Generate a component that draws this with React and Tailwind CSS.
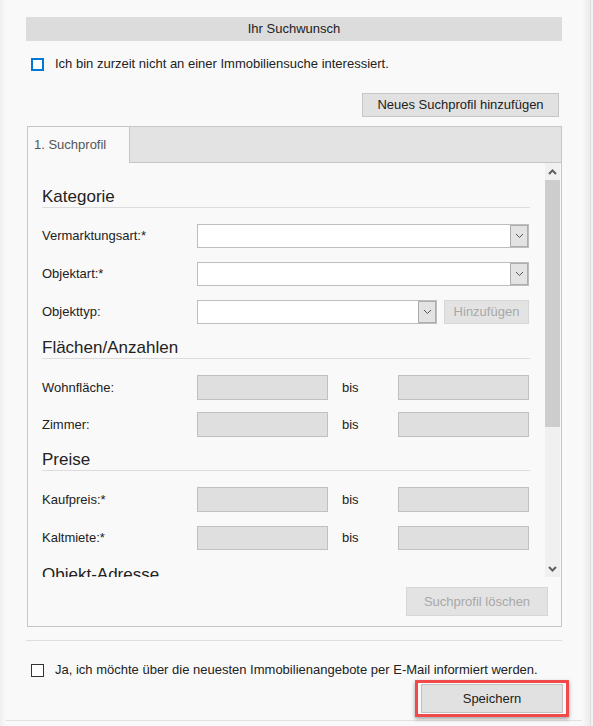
const font = { fontFamily: '"Liberation Sans", Arial, sans-serif' };

function Chevron({ up = false, bold = false, className = "" }) {
  return (
    <svg width="9" height="6" viewBox="0 0 9 6" className={className}>
      <polyline
        points={up ? "1,5 4.5,1.5 8,5" : "1,1 4.5,4.5 8,1"}
        fill="none"
        stroke={bold ? "#606060" : "#555"}
        strokeWidth={bold ? 2 : 1}
      />
    </svg>
  );
}

function Select({ width }) {
  return (
    <div className={`flex h-[24px] items-stretch justify-end border border-[#bdbdbd] bg-white ${width}`}>
      <div className="flex w-[18px] items-center justify-center border border-[#adadad] bg-[#e3e3e3]">
        <Chevron />
      </div>
    </div>
  );
}

function Heading({ children, className = "" }) {
  return (
    <div className={`border-b border-[#dcdcdc] text-[17px] leading-[20px] text-[#222] ${className}`}>
      {children}
    </div>
  );
}

function FieldRow({ label, children, className = "" }) {
  return (
    <div className={`flex items-center ${className}`}>
      <div className="w-[155px] shrink-0">{label}</div>
      {children}
    </div>
  );
}

function RangeRow({ label, className = "", h = "h-[25px]" }) {
  return (
    <FieldRow label={label} className={className}>
      <div className={`w-[131px] border border-[#c0c0c0] bg-[#dfdfdf] ${h}`} />
      <div className="w-[70px] pl-[14px]">bis</div>
      <div className={`w-[131px] border border-[#c0c0c0] bg-[#dfdfdf] ${h}`} />
    </FieldRow>
  );
}

export default function App() {
  return (
    <div
      className="flex h-[726px] w-[593px] overflow-hidden bg-[#f9f9f9] text-[13px] leading-[16px] text-[#222]"
      style={font}
    >
      <div className="w-[6px] shrink-0 bg-gradient-to-r from-[#efefef] to-[#f9f9f9]" />

      <div className="flex h-[721px] flex-1 flex-col border-b border-[#e2e2e2] px-[20px] pt-[17px]">
        <div className="flex h-[24px] shrink-0 items-center justify-center bg-[#dcdcdc]">Ihr Suchwunsch</div>

        <label className="mt-[15px] flex shrink-0 items-center pl-[5px]">
          <span className="h-[13px] w-[13px] border-2 border-[#0078d7] bg-white" />
          <span className="ml-[11px]">Ich bin zurzeit nicht an einer Immobiliensuche interessiert.</span>
        </label>

        <div className="mt-[21px] flex shrink-0 justify-end pr-[3px]">
          <button className="h-[24px] w-[197px] border border-[#c6c6c6] bg-[#e1e1e1] text-[#222]">
            Neues Suchprofil hinzufügen
          </button>
        </div>

        <div className="ml-px mt-[9px] flex h-[501px] shrink-0 flex-col border border-[#c6c6c6]">
          <div className="flex h-[36px] shrink-0 border-b border-[#c6c6c6] bg-[#e3e3e3]">
            <div className="-mb-px flex w-[102px] items-center border-r border-[#c6c6c6] bg-[#f9f9f9] pl-[6px] text-[#555]">
              1. Suchprofil
            </div>
          </div>

          <div className="flex h-[414px] shrink-0">
            <div className="h-full flex-1 overflow-hidden pl-[14px] pr-[15px]">
              <Heading className="mt-[24px]">Kategorie</Heading>
              <FieldRow label="Vermarktungsart:*" className="mt-[16px]">
                <Select width="w-[332px]" />
              </FieldRow>
              <FieldRow label="Objektart:*" className="mt-[14px]">
                <Select width="w-[332px]" />
              </FieldRow>
              <FieldRow label="Objekttyp:" className="mt-[14px]">
                <Select width="w-[240px]" />
                <button className="ml-[7px] h-[24px] w-[85px] border border-[#d6d6d6] bg-[#e3e3e3] text-[#a8a8a8]">
                  Hinzufügen
                </button>
              </FieldRow>

              <Heading className="mt-[14px]">Flächen/Anzahlen</Heading>
              <RangeRow label="Wohnfläche:" className="mt-[16px]" />
              <RangeRow label="Zimmer:" className="mt-[12px]" />

              <Heading className="mt-[13px]">Preise</Heading>
              <RangeRow label="Kaufpreis:*" className="mt-[16px]" />
              <RangeRow label="Kaltmiete:*" className="mt-[14px]" h="h-[24px]" />

              <Heading className="mt-[15px]">Objekt-Adresse</Heading>
            </div>

            <div className="mr-px flex w-[15px] shrink-0 flex-col bg-[#f0f0f0]">
              <div className="flex h-[17px] items-center justify-center">
                <Chevron up bold />
              </div>
              <div className="h-[247px] bg-[#cdcdcd]" />
              <div className="flex-1" />
              <div className="flex h-[17px] items-center justify-center">
                <Chevron bold />
              </div>
            </div>
          </div>

          <div className="mt-[10px] flex justify-end pr-[13px]">
            <button className="h-[29px] w-[142px] border border-[#d6d6d6] bg-[#e3e3e3] text-[#a8a8a8]">
              Suchprofil löschen
            </button>
          </div>
        </div>

        <div className="mt-[13px] shrink-0 border-t border-[#dedede]" />

        <label className="mt-[21px] flex shrink-0 items-center pl-[5px]">
          <span className="h-[13px] w-[13px] border border-[#333] bg-white" />
          <span className="ml-[11px]">Ja, ich möchte über die neuesten Immobilienangebote per E-Mail informiert werden.</span>
        </label>

        <div className="-mr-[7px] mt-[2px] flex shrink-0 justify-end">
          <div className="border-[3px] border-[#f04a4a] px-[3px] py-px shadow-[0_2px_4px_rgba(0,0,0,0.35)]">
            <button className="h-[29px] w-[142px] border border-[#c3c3c3] bg-[#e1e1e1] text-[#222]">
              Speichern
            </button>
          </div>
        </div>
      </div>

      <div className="flex w-[11px] shrink-0">
        <div className="w-[8px] bg-gradient-to-r from-[#f9f9f9] to-[#ececec]" />
        <div className="w-px bg-[#dcdcdc]" />
        <div className="flex-1 bg-[#f2f2f2]" />
      </div>
    </div>
  );
}
